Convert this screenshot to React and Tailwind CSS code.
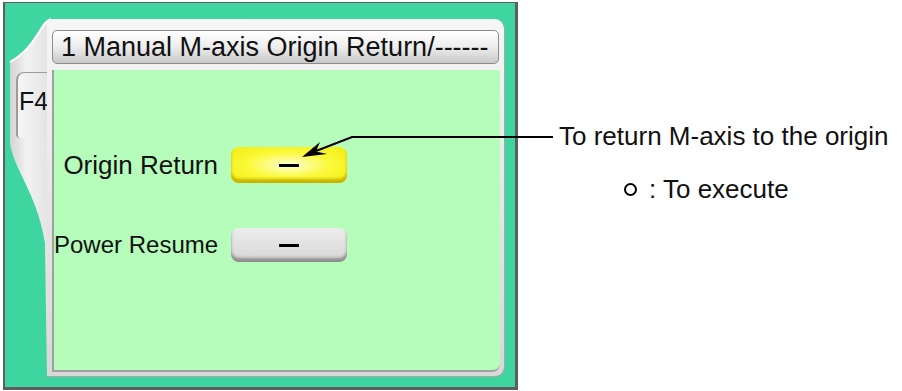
import React from 'react';

const Minus = () => <div className="w-[20px] h-[3px] bg-black" />;

const App = () => {
    return (
        <div className="relative w-[902px] h-[391px] bg-white flex items-start font-['Liberation_Sans',Arial,sans-serif] text-[#111]">
            {/* Panel */}
            <div className="ml-[3px] mt-[2px] w-[515px] h-[388px] box-border border-t border-l-2 border-r-[3px] border-b-[3px] border-[#5e5e5e] bg-[#3fd5a0] relative">
                {/* side wing of silver frame */}
                <svg className="absolute left-0 top-0" width="60" height="380" viewBox="0 0 60 380">
                    <defs>
                        <linearGradient id="wing" x1="0" y1="0" x2="1" y2="0">
                            <stop offset="0" stopColor="#d4d4d4" />
                            <stop offset="0.4" stopColor="#f2f2f2" />
                            <stop offset="1" stopColor="#e0e0e0" />
                        </linearGradient>
                    </defs>
                    <path
                        d="M46 16 C 36 18, 32 44, 5 59 L 5 140 C 8 165, 32 190, 40 240 L 42 372 L 48 372 L 48 16 Z"
                        fill="url(#wing)"
                    />
                    <path d="M5 59 C 32 44, 36 18, 46 16" fill="none" stroke="#ffffff" strokeWidth="2" />
                </svg>

                <div className="relative flex items-start pt-[16px]">
                    {/* F4 tab column */}
                    <div className="w-[42px] pl-[11px] pt-[53px]">
                        <div className="w-[31px] h-[66px] rounded-tl-[8px] rounded-bl-[4px] border-l-2 border-t border-[#9c9c9c] bg-gradient-to-r from-[#f6f6f6] to-[#e4e4e4] text-[25px] leading-none pt-[16px] pl-[1px]">
                            F4
                        </div>
                    </div>

                    {/* Silver frame */}
                    <div className="w-[458px] h-[358px] rounded-tr-[10px] rounded-br-[10px] rounded-tl-[6px] bg-gradient-to-b from-[#f6f6f6] to-[#d8d8d8] pl-[5px] pr-[5px] pt-[11px] border-r border-b border-[#a8a8a8]">
                        <div className="h-[34px] rounded-[5px] border border-[#8c8c8c] bg-gradient-to-b from-white via-[#ededed] to-[#c9c9c9] flex items-center pl-[8px] text-[27px] leading-none whitespace-nowrap">
                            1 Manual M-axis Origin Return/------
                        </div>
                        <div className="mt-[6px] h-[302px] w-[448px] bg-[#b6fdbb] rounded-br-[8px] border-l-2 border-b-2 border-[#a0a0a0] pt-[77px]">
                            <div className="grid grid-cols-[164px_116px] gap-x-[13px] items-center">
                                <div className="text-right text-[26px] leading-none whitespace-nowrap">Origin Return</div>
                                <div className="h-[36px] rounded-[8px] bg-[radial-gradient(ellipse_at_center,#ffffd8_0%,#fbf93a_50%,#f2ec10_100%)] shadow-[inset_0_-4px_3px_#c6b300] flex items-center justify-center">
                                    <Minus />
                                </div>
                                <div className="mt-[45px] text-right text-[24px] leading-none whitespace-nowrap">Power Resume</div>
                                <div className="mt-[45px] h-[34px] rounded-[8px] bg-gradient-to-b from-[#ededed] to-[#d6d6d6] shadow-[inset_0_-4px_3px_#8e8e8e] flex items-center justify-center">
                                    <Minus />
                                </div>
                            </div>
                        </div>
                    </div>
                </div>
            </div>

            {/* Notes */}
            <div className="ml-[41px] mt-[121px] flex flex-col text-[26px] leading-[30px] whitespace-nowrap">
                <div>To return M-axis to the origin</div>
                <div className="mt-[23px] pl-[65px] flex items-center">
                    <span className="w-[13px] h-[13px] rounded-full border-2 border-black" />
                    <span className="ml-[12px]">: To execute</span>
                </div>
            </div>

            {/* Callout arrow */}
            <svg className="absolute left-0 top-0 pointer-events-none" width="902" height="391" viewBox="0 0 902 391">
                <polyline points="553,137 352,137 316,151" fill="none" stroke="#000" strokeWidth="2" />
                <polygon points="302,157 320,142 316,151.4 327,154" fill="#000" />
            </svg>
        </div>
    );
};

export default App;
